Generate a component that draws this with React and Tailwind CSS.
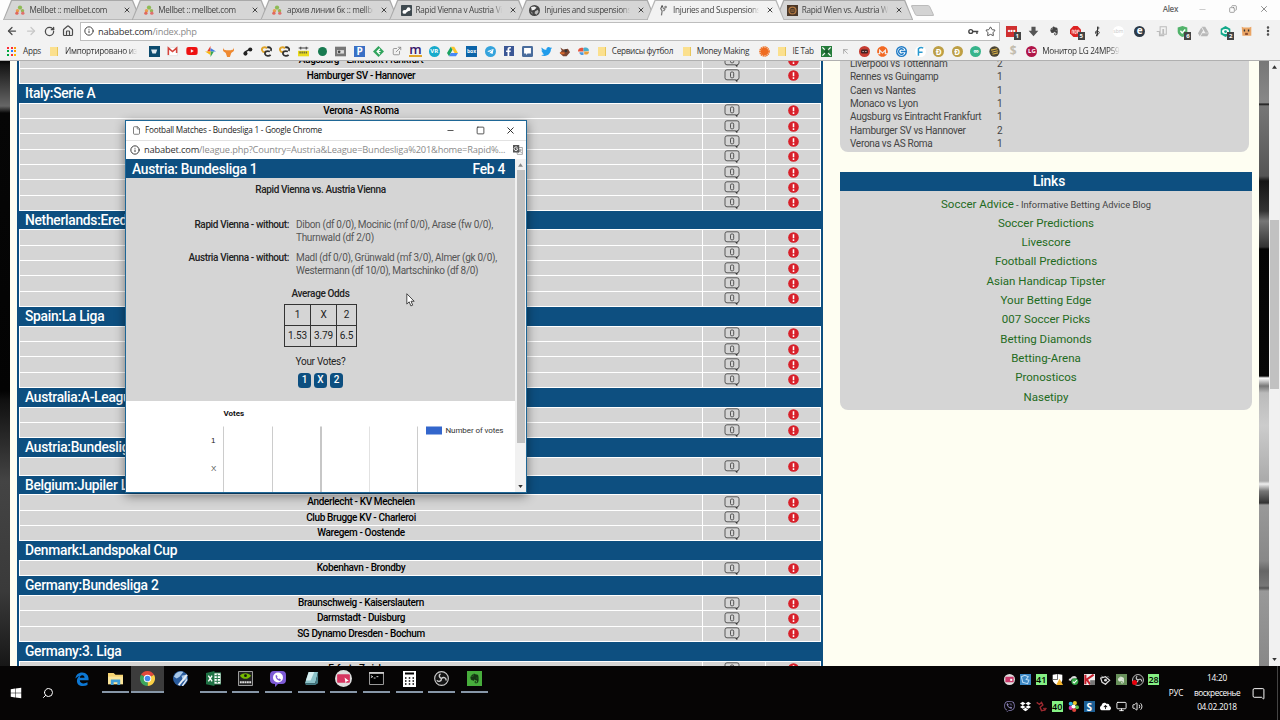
import React from "react"
import clsx from "clsx"
import { FaEvernote, FaYoutube, FaFacebookF, FaTwitter, FaTelegramPlane, FaGoogleDrive, FaDropbox, FaViber, FaWindows } from "react-icons/fa"
import { FaCloudArrowUp, FaMonero } from "react-icons/fa6"
import { ArrowLeft, ArrowRight, RotateCw, House, Info, Star, X, Minus, Square, Copy, File, Search, Monitor, Volume2, MessageSquare, ExternalLink, ArrowUpLeft, EllipsisVertical } from "lucide-react"

const tabs = [
    { title: "Mellbet :: mellbet.com", icon: "mell" },
    { title: "Mellbet :: mellbet.com", icon: "mell" },
    { title: "архив линии бк :: mellbet", icon: "mell" },
    { title: "Rapid Vienna v Austria Vienna", icon: "dots" },
    { title: "Injuries and suspensions", icon: "ball" },
    { title: "Injuries and Suspensions", icon: "player", active: true },
    { title: "Rapid Wien vs. Austria Wien", icon: "brown" },
];

const leagues = [
    { name: "Italy:Serie A", matches: ["Verona - AS Roma", "", "", "", "", "", ""] },
    { name: "Netherlands:Eredivisie", matches: ["", "", "", "", ""] },
    { name: "Spain:La Liga", matches: ["", "", "", ""] },
    { name: "Australia:A-League", matches: ["", ""] },
    { name: "Austria:Bundesliga 1", matches: [""], tall: true },
    { name: "Belgium:Jupiler League", matches: ["Anderlecht - KV Mechelen", "Club Brugge KV - Charleroi", "Waregem - Oostende"], noAlert: 2 },
    { name: "Denmark:Landspokal Cup", matches: ["Kobenhavn - Brondby"] },
    { name: "Germany:Bundesliga 2", matches: ["Braunschweig - Kaiserslautern", "Darmstadt - Duisburg", "SG Dynamo Dresden - Bochum"] },
    { name: "Germany:3. Liga", matches: ["Erfurt - Zwickau"] },
];

const votes = [
    ["Liverpool vs Tottenham", 2],
    ["Rennes vs Guingamp", 1],
    ["Caen vs Nantes", 1],
    ["Monaco vs Lyon", 1],
    ["Augsburg vs Eintracht Frankfurt", 1],
    ["Hamburger SV vs Hannover", 2],
    ["Verona vs AS Roma", 1],
];

const links = ["Soccer Predictions", "Livescore", "Football Predictions", "Asian Handicap Tipster", "Your Betting Edge", "007 Soccer Picks", "Betting Diamonds", "Betting-Arena", "Pronosticos", "Nasetipy"];

function Svg({ children, className = "size-[11px]", box = "0 0 16 16" }) {
    return <svg viewBox={box} className={clsx("shrink-0", className)} fill="none">{children}</svg>;
}

function Favicon({ type }) {
    if (type === "mell") {
        return (
            <Svg className="size-[10px]">
                <circle cx="8" cy="4" r="3.400" fill="#8dbb55" />
                <circle cx="4" cy="9" r="2.800" fill="#e8a04e" /><circle cx="12" cy="9" r="2.800" fill="#96b655" />
                <circle cx="3" cy="13" r="2.600" fill="#e0685e" /><circle cx="12.500" cy="13" r="2.600" fill="#e0706c" />
            </Svg>
        );
    }
    if (type === "dots") {
        return (
            <Svg>
                <rect width="16" height="16" rx="1" fill="#3f4a50" />
                <circle cx="5" cy="10" r="2.800" fill="#fff" /><circle cx="11" cy="6" r="2.800" fill="#fff" /><path d="M4 9l6-4 2 3-6 4z" fill="#fff" />
            </Svg>
        );
    }
    if (type === "ball") {
        return (
            <Svg>
                <circle cx="8" cy="8" r="8" fill="#444" />
                <path d="M3 3l5-1 3 2-3 3-4 1z" fill="#f2f2f2" /><path d="M9 9l4-2 1 3-3 4-3-2z" fill="#bbb" /><path d="M2 9l3 2v3z" fill="#999" />
            </Svg>
        );
    }
    if (type === "player") {
        return (
            <Svg>
                <path d="M6 2L4 5l2 4-1 6M7 4l3 2-2 3" stroke="#777" strokeWidth="1.800" /><circle cx="11" cy="3" r="2" fill="#888" /><circle cx="6" cy="2" r="1.500" fill="#555" />
            </Svg>
        );
    }
    return (
        <Svg>
            <rect width="16" height="16" fill="#4a3728" />
            <circle cx="8" cy="8" r="5" stroke="#b57a42" strokeWidth="1.800" /><path d="M5 7h6M5 9h6" stroke="#b57a42" />
        </Svg>
    );
}

function Tab({ tab }) {
    return (
        <div className={clsx("-ml-[9.300px] h-[20px] w-[138px] shrink-0 px-px pt-px [clip-path:polygon(0_100%,8px_0,130px_0,100%_100%)]", tab.active ? "relative z-10 bg-[#b5b5b5]" : "bg-[#a9a9a9]")}>
            <div className={clsx("flex h-full items-center pl-[9.500px] [clip-path:polygon(0_100%,8px_0,128px_0,100%_100%)]", tab.active ? "bg-[#f2f2f2] pb-px" : "border-b border-[#b8b8b8] bg-[#d6d6d6]")}>
                <div className="flex w-[13px] justify-center"><Favicon type={tab.icon} /></div>
                <div className="ml-[3px] w-[88px] overflow-hidden whitespace-nowrap text-[8.200px] tracking-[-0.320px] text-[#444] [mask-image:linear-gradient(to_right,#000_88%,transparent_98%)]">{tab.title}</div>
                <X className="ml-[5px] size-[8px] text-[#444]" strokeWidth={3} />
            </div>
        </div>
    );
}

function Badge({ children }) {
    return <span className="absolute -right-[3px] -bottom-[3px] h-[8px] w-[7px] bg-[#444] text-center text-[6px] leading-[8px] font-bold text-white">{children}</span>;
}

function Ext({ children }) {
    return <div className="flex w-[21.350px] shrink-0 justify-center"><div className="relative flex size-[12px] items-center justify-center">{children}</div></div>;
}

function Toolbar() {
    return (
        <div className="flex h-[22px] items-center bg-[#f2f2f2]">
            <div className="flex w-[80px] shrink-0 items-center pl-[6px] text-[#4c4c4c]">
                <ArrowLeft className="size-[12px]" strokeWidth={2.500} />
                <ArrowRight className="ml-[7px] size-[12px] text-[#c8c8c8]" strokeWidth={2.500} />
                <RotateCw className="ml-[7px] size-[11px]" strokeWidth={2.800} />
                <House className="ml-[7px] size-[12px]" strokeWidth={2.400} />
            </div>
            <div className="flex h-[19px] w-[920px] shrink-0 items-center border border-[#bdbdbd] bg-white pr-[3px] pl-[3px]">
                <Info className="size-[10px] text-[#444]" strokeWidth={2.400} />
                <span className="ml-[4px] flex-1 text-[9.300px] leading-[17px] tracking-[-0.240px] text-[#333]">nababet.com<span className="text-[#8b8b8b]">/index.php</span></span>
                <Svg className="mr-[6px] h-[7px] w-[11px]" box="0 0 16 10">
                    <circle cx="4" cy="5" r="2.800" stroke="#444" strokeWidth="2" /><path d="M7 5h8M13 5v3.500" stroke="#444" strokeWidth="2" />
                </Svg>
                <Star className="size-[11px] text-[#444]" strokeWidth={2} />
            </div>
            <div className="ml-[1px] flex">
                <Ext><span className="flex size-[11px] items-center justify-center bg-[#cf2f2f] text-[7px] leading-none font-bold text-white">•••</span><Badge>1</Badge></Ext>
                <Ext><Svg><path d="M5 1h6v6h4l-7 8-7-8h4z" fill="#555" /></Svg></Ext>
                <Ext><FaEvernote className="size-[10px] text-[#444]" /></Ext>
                <Ext>
                    <Svg><path d="M5 0h6l5 5v6l-5 5H5l-5-5V5z" fill="#d22" /><path d="M3 11V6h2v5M7 6v5h2V6zM11 11V6h2v3h-2" stroke="#fff" /></Svg>
                    <Badge>5</Badge>
                </Ext>
                <Ext><Svg className="h-[12px] w-[11px]"><path d="M8 14V2c3 0 2 3 0 4.500C4 9 4 13 8 12.500s3-4.500 0-4-1.500 2.500 0 2.500" stroke="#333" strokeWidth="1.400" /><circle cx="7" cy="14.500" r="1.300" fill="#333" /></Svg></Ext>
                <Ext><span className="size-[11px] rounded-full bg-white text-center text-[5px] leading-[11px] text-[#c5c5c5]">sbm</span></Ext>
                <Ext><span className="size-[11px] rounded-full bg-[#2d3a47] text-center text-[10px] leading-[9px] font-bold text-white">e</span></Ext>
                <Ext><Svg><path d="M6 1h9v11h-4V5h-1v7H6zM1 8h4v6h7" stroke="#bcbcbc" strokeWidth="1.500" /></Svg></Ext>
                <Ext><Svg><path d="M8 0l7 2v6c0 4-4 7-7 8-3-1-7-4-7-8V2z" fill="#52b36b" /><path d="M5 7l2.500 3L12 5" stroke="#fff" strokeWidth="2" /></Svg><Badge>6</Badge></Ext>
                <Ext><FaGoogleDrive className="size-[11px] text-[#b9b9b9]" /></Ext>
                <Ext><Svg><path d="M8 0l7 4v8l-7 4-7-4V4z" fill="#13a98b" /><ellipse cx="8" cy="8" rx="5" ry="3.500" fill="#fff" /><circle cx="8" cy="8" r="2" fill="#13a98b" /></Svg><Badge>2</Badge></Ext>
                <Ext><Svg><path d="M1 1l3 1h8l3-1v13H2z" fill="#eaa565" /><path d="M5 5v3M11 5v3" stroke="#333" strokeWidth="2" /><path d="M6 10h4v3H6z" fill="#8b4a2d" /></Svg></Ext>
                <Ext><EllipsisVertical className="size-[12px] text-[#444]" strokeWidth={3} /></Ext>
            </div>
        </div>
    );
}

function Folder() {
    return <span className="h-[9px] w-[8px] shrink-0 border-r border-[#e8c65b] bg-[#fbe08e]" />;
}

function Mark({ children }) {
    return <div className="flex w-[18.670px] shrink-0 justify-center tracking-normal">{children}</div>;
}

// round coloured bookmark with a letter in it
function Coin({ className, children }) {
    return <Mark><span className={clsx("size-[11px] rounded-full text-center text-[8px] leading-[11px] font-bold text-white", className)}>{children}</span></Mark>;
}

function Squiggle() {
    return (
        <Mark>
            <Svg>
                <path d="M9 3C4 0 0 3 2 7c1 3 5 2 5 0" stroke="#e0a52b" strokeWidth="2.800" />
                <path d="M9 2c5-1 7 3 5 5M13 8c-5-2-8 1-7 4s6 3 8 1" stroke="#333" strokeWidth="2.600" />
            </Svg>
        </Mark>
    );
}

function Bookmarks() {
    return (
        <div className="flex h-[18px] items-center overflow-hidden bg-[#f2f2f2] text-[8.200px] tracking-[-0.280px] whitespace-nowrap text-[#333]">
            <div className="ml-[7px] grid grid-cols-3 gap-[1.500px]">
                {["bg-red-500", "bg-red-500", "bg-amber-500", "bg-green-600", "bg-blue-500", "bg-amber-500", "bg-green-600", "bg-red-500", "bg-amber-400"].map((c, i) => <span key={i} className={clsx("size-[2px]", c)} />)}
            </div>
            <span className="ml-[7px] w-[27px]">Apps</span>
            <Folder />
            <span className="ml-[7px] w-[80px] overflow-hidden [mask-image:linear-gradient(to_right,#000_80%,transparent_90%)]">Импортировано из IE</span>
            <Mark><Svg><rect width="16" height="16" fill="#0c4b6e" /><path d="M3 5h9l-2 6H5z" fill="#dfe9ef" /></Svg></Mark>
            <Mark><Svg><path d="M1 2h14v12H1z" fill="#fff" stroke="#ddd" /><path d="M2 13V3l6 5 6-5v7" stroke="#d6453d" strokeWidth="2.300" /></Svg></Mark>
            <Mark><FaYoutube className="size-[12px] text-[#e11]" /></Mark>
            <Mark><Svg><path d="M8 0v8H3z" fill="#e34133" /><path d="M16 8H8V3z" fill="#3f7de8" /><path d="M8 16V8h5z" fill="#34a653" /><path d="M0 8h8v5z" fill="#f8b90a" /></Svg></Mark>
            <Mark><Svg><path d="M0 2c1 4 3 4 8 4s7 0 8-4c1 5-1 7-4 8l-2 6H6l-2-6C1 9-1 7 0 2z" fill="#ef8a32" /></Svg></Mark>
            <Mark><Svg><circle cx="5" cy="11" r="3" fill="#222" /><circle cx="12" cy="5" r="3" fill="#222" /><path d="M4 9l7-4" stroke="#222" strokeWidth="2" /></Svg></Mark>
            <Squiggle />
            <Squiggle />
            <Mark><Svg><rect y="7" width="16" height="8" fill="#eadb1c" /><path d="M1 3h14M4 1v4M12 1v4M3 8v3M6 8v3M9 8v3M12 8v3" stroke="#444" strokeWidth="1.500" /></Svg></Mark>
            <Mark><span className="size-[9px] rounded-full bg-[#187a50]" /></Mark>
            <Mark><Svg><rect width="16" height="14" y="1" fill="#777" /><path d="M3 6h10v5H3z" fill="#ddd" /><circle cx="6" cy="8.500" r="2" fill="#444" /></Svg></Mark>
            <Mark><span className="size-[11px] bg-[#3a70c5] text-center text-[10px] leading-[11px] font-bold text-white">P</span></Mark>
            <Mark><Svg><path d="M8 0l8 8-8 8-8-8z" fill="#31a45d" /><path d="M10 4L6 8l4 4M11 8H6" stroke="#fff" strokeWidth="1.800" /></Svg></Mark>
            <Mark><ExternalLink className="size-[10px] text-[#888]" /></Mark>
            <Mark><span className="h-[12px] border-b-2 border-[#e0a52b] text-[13px] leading-[8px] font-semibold text-[#38166b]">m</span></Mark>
            <Coin className="bg-[#17aacb] !text-[6px]">VR</Coin>
            <Mark><Svg><path d="M5.500 1h5L16 10h-5z" fill="#fbc52c" /><path d="M5.500 1L8 5.500 3 15 0 10z" fill="#1aa260" /><path d="M5.500 10H16l-3 5H3z" fill="#4688f4" /></Svg></Mark>
            <Mark><span className="size-[11px] bg-[#0c64a8] text-center text-[5px] leading-[11px] font-bold text-white">box</span></Mark>
            <Mark><span className="flex size-[11px] items-center justify-center rounded-full bg-[#34a3dc]"><FaTelegramPlane className="size-[7px] text-white" /></span></Mark>
            <Mark><span className="flex size-[10px] items-end justify-center bg-[#3b5795]"><FaFacebookF className="size-[9px] text-white" /></span></Mark>
            <Mark><Svg><rect width="16" height="16" rx="2" fill="#496c9c" /><path d="M3 3h10v8H8l-2 2v-2H3z" fill="#fff" /></Svg></Mark>
            <Mark><FaTwitter className="size-[11px] text-[#209ceb]" /></Mark>
            <Mark><Svg><path d="M2 2l4 3 7-1 3 5-5 6H6l-5-5 3-3z" fill="#7a4430" /><path d="M1 9h7v3H3z" fill="#d86a2c" /><circle cx="10" cy="7" r="2" fill="#333" /></Svg></Mark>
            <Mark><Svg><path d="M0 8c0-6 6-6 8-5v5z" fill="#e5533d" /><path d="M8 3c5-2 8 1 8 4l-8 1z" fill="#47b0cf" /><path d="M16 8c0 5-5 5-7 4V8z" fill="#e9a03b" /><path d="M2 9h6v4c-3 1-6-1-6-4z" fill="#4d9be0" /></Svg></Mark>
            <div className="ml-[5px] flex"><Folder /></div>
            <span className="ml-[6px] w-[71px]">Сервисы футбол</span>
            <Folder />
            <span className="ml-[6px] w-[58px]">Money Making</span>
            <Mark><Svg><circle cx="8" cy="8" r="6.500" stroke="#ee7328" strokeWidth="2.500" strokeDasharray="2 .7" /><circle cx="8" cy="8" r="5.500" fill="#ee6b20" /></Svg></Mark>
            <div className="ml-[5px] flex"><Folder /></div>
            <span className="ml-[6px] w-[25px]">IE Tab</span>
            <Mark><Svg><rect width="16" height="16" fill="#247c3a" /><path d="M2 2l12 12M14 2L2 14" stroke="#fff" strokeWidth="2" /><circle cx="8" cy="8" r="3.500" fill="#195f2d" /></Svg></Mark>
            <Mark><ArrowUpLeft className="size-[9px] text-[#999]" /></Mark>
            <Mark><Svg><circle cx="8" cy="8" r="8" fill="#c63c32" /><rect x="3" y="5" width="10" height="6" rx="2" fill="#422" /><path d="M5 8h2M9 8h2" stroke="#fff" /></Svg></Mark>
            <Mark><FaMonero className="size-[11px] text-[#f26822]" /></Mark>
            <Mark><Svg><circle cx="8" cy="8" r="7" fill="#fff" stroke="#1d79c4" strokeWidth="2" /><path d="M11 5.500a4 4 0 100 5M7 8h8" stroke="#1d79c4" strokeWidth="2" /></Svg></Mark>
            <Mark><Svg><circle cx="8" cy="8" r="8" fill="#fff" /><path d="M5 14V4c2-2 5-2 7-1M5 9h6" stroke="#2999cf" strokeWidth="2.200" /></Svg></Mark>
            <Coin className="bg-[#bd9f45]">Ð</Coin>
            <Coin className="bg-[#bd9f45]">Ð</Coin>
            <Coin className="bg-[#37b48b] !leading-[10px]">∞</Coin>
            <Mark><Svg><circle cx="8" cy="8" r="7.500" fill="#4a4433" /><path d="M3 6l9-2M4 9l9-2M5 12l8-2" stroke="#d9b047" strokeWidth="1.500" /></Svg></Mark>
            <Mark><span className="text-[12px] leading-none font-bold text-[#c2bcae]">$</span></Mark>
            <Coin className="bg-[#b01548] !text-[6px]">LG</Coin>
            <span className="ml-[1px] w-[78px] overflow-hidden [mask-image:linear-gradient(to_right,#000_86%,transparent)]">Монитор LG 24MP59</span>
        </div>
    );
}

function MatchRow({ name, alert = true, tall }) {
    return (
        <div className={clsx("flex shrink-0 border-b border-white bg-white text-center text-[10px] font-medium tracking-[-0.360px] text-black", tall ? "h-[18px]" : "h-[15.330px]")}>
            <div className="w-[682px] bg-[#d5d5d5] leading-[14.500px]">{name}</div>
            <div className="ml-px flex w-[62px] items-center justify-center bg-[#d5d5d5] pr-[4px]">
                <Svg className="h-[13px] w-[16px]" box="0 0 16 13">
                    <path d="M3 .8h10q2 0 2 2v6q0 2-2 2v1.700l-1.800-1.700H3q-2 0-2-2v-6q0-2 2-2z" stroke="#4a4a4a" strokeWidth=".9" />
                    <path d="M11 10.800h2.200v1.900z" fill="#333" />
                    <rect x="6.500" y="3" width="3.200" height="5.800" rx="1.200" stroke="#444" strokeWidth=".9" />
                </Svg>
            </div>
            <div className="ml-px flex flex-1 items-center justify-center bg-[#d5d5d5]">
                {alert && (
                    <Svg className="h-[11px] w-[11px]" box="0 0 12 12">
                        <circle cx="6" cy="6" r="5.800" fill="#d8202a" /><path d="M6 2.500v4.200M6 8v1.700" stroke="#fff" strokeWidth="1.700" />
                    </Svg>
                )}
            </div>
        </div>
    );
}

function LeagueTable() {
    return (
        <div className="ml-[7px] h-full w-[806px] shrink-0 overflow-hidden bg-[#0d4f80] px-[2px]">
            <div className="-mt-[7.670px] border-x border-white">
                <MatchRow name="Augsburg - Eintracht Frankfurt" />
                <MatchRow name="Hamburger SV - Hannover" />
            </div>
            {leagues.map((league) => (
                <div key={league.name}>
                    <h2 className="h-[18.600px] overflow-hidden pl-[6px] text-[13.800px] leading-[18.800px] font-medium tracking-[-0.280px] text-white">{league.name}</h2>
                    <div className="border-x border-t border-white">
                        {league.matches.map((m, i) => <MatchRow key={i} name={m} tall={league.tall} alert={league.noAlert !== i} />)}
                    </div>
                </div>
            ))}
        </div>
    );
}

function Sidebar() {
    return (
        <div className="ml-[17px] w-[412px] shrink-0">
            <div className="h-[91px] w-[409px] overflow-hidden rounded-b-[8px] bg-[#d5d5d5] pl-[10px] text-[10px] text-[#444]">
                <div className="-mt-[4px]">
                    {votes.map(([match, n]) => (
                        <div key={match} className="flex h-[13.330px] leading-[13.330px]">
                            <span className="w-[147px] tracking-[-0.290px]">{match}</span><span>{n}</span>
                        </div>
                    ))}
                </div>
            </div>
            <h2 className="mt-[20px] h-[18.500px] bg-[#0d4f80] pl-[6px] text-center text-[13.800px] leading-[19px] font-medium tracking-[-0.150px] text-white">Links</h2>
            <div className="h-[219.500px] rounded-b-[8px] bg-[#d5d5d5] pt-[4px] text-center text-[11.500px] text-[#1f6b22]">
                <p className="h-[19.300px] leading-[19.300px]">Soccer Advice<span className="text-[9.300px] text-[#444]"> - Informative Betting Advice Blog</span></p>
                {links.map((l) => <p key={l} className="h-[19.330px] leading-[19.330px]">{l}</p>)}
            </div>
        </div>
    );
}

function PopupWindow() {
    return (
        <div className="absolute top-[120px] left-[125px] flex h-[373px] w-[402px] flex-col overflow-hidden border border-[#1f6796] bg-white shadow-[0_3px_10px_rgba(0,0,0,0.450)]">
            <div className="flex h-[19px] shrink-0 items-center pl-[6px] font-['Open_Sans',sans-serif] text-[8.200px] text-[#222]">
                <File className="size-[9px] text-[#555]" strokeWidth={2} />
                <span className="ml-[4px] flex-1 tracking-[-0.220px]">Football Matches - Bundesliga 1 - Google Chrome</span>
                <Minus className="size-[9px]" strokeWidth={2} />
                <Square className="ml-[21px] size-[9px]" strokeWidth={2} />
                <X className="mr-[10px] ml-[20px] size-[11px]" strokeWidth={2} />
            </div>
            <div className="flex h-[19px] shrink-0 items-center border-t border-[#e2e2e2] pl-[4px] font-['Open_Sans',sans-serif] text-[9.300px] text-[#333]">
                <Info className="size-[10px]" strokeWidth={2.300} />
                <span className="ml-[4px] w-[366px] tracking-[-0.180px] whitespace-nowrap">nababet.com<span className="text-[#8b8b8b]">/league.php?Country=Austria&amp;League=Bundesliga%201&amp;home=Rapid%...</span></span>
                <Svg className="ml-[3px] size-[10px]"><path d="M5 4h10v11H7z" fill="#fff" stroke="#777" /><rect width="10" height="12" fill="#555" /><path d="M7 4a3 3 0 100 4V6H5" stroke="#fff" strokeWidth="1.400" /><path d="M9 8h5M11.500 7c0 3-1 4-3 5M10 9l4 4" stroke="#666" /></Svg>
            </div>
            <div className="flex min-h-0 flex-1">
                <div className="flex w-[389px] flex-col overflow-hidden text-[10px] text-[#222]">
                    <div className="flex h-[19px] shrink-0 justify-between bg-[#0d4f80] pr-[10px] pl-[6px] text-[13.800px] leading-[20px] font-medium tracking-[-0.280px] text-white">
                        <span>Austria: Bundesliga 1</span><span>Feb 4</span>
                    </div>
                    <div className="flex h-[223px] shrink-0 flex-col items-center bg-[#d5d5d5]">
                        <p className="mt-[5px] h-[13px] leading-[13px] font-medium tracking-[-0.380px]">Rapid Vienna vs. Austria Vienna</p>
                        <div className="mt-[22px] flex w-full leading-[13.330px] whitespace-nowrap">
                            <p className="w-[163px] text-right font-medium tracking-[-0.380px]">Rapid Vienna - without:</p>
                            <p className="ml-[7px] tracking-[-0.300px] text-[#555]">Dibon (df 0/0), Mocinic (mf 0/0), Arase (fw 0/0),<br />Thurnwald (df 2/0)</p>
                        </div>
                        <div className="mt-[6.500px] flex w-full leading-[13.330px] whitespace-nowrap">
                            <p className="w-[163px] text-right font-medium tracking-[-0.380px]">Austria Vienna - without:</p>
                            <p className="ml-[7px] tracking-[-0.300px] text-[#555]">Madl (df 0/0), Grünwald (mf 3/0), Almer (gk 0/0),<br />Westermann (df 10/0), Martschinko (df 8/0)</p>
                        </div>
                        <p className="mt-[9px] leading-[13px] font-medium tracking-[-0.360px]">Average Odds</p>
                        <div className="mt-[4.500px] grid grid-cols-[26px_26px_20px] grid-rows-2 border-t border-l border-[#333] text-center leading-[20px] tracking-[-0.100px]">
                            {["1", "X", "2", "1.53", "3.79", "6.5"].map((v) => <span key={v} className="h-[21px] border-r border-b border-[#333]">{v}</span>)}
                        </div>
                        <p className="mt-[8px] leading-[13px] tracking-[-0.300px]">Your Votes?</p>
                        <div className="mt-[5px] flex gap-[3px] text-center leading-[14px] font-medium text-white">
                            {["1", "X", "2"].map((v) => <span key={v} className="h-[15px] w-[13px] rounded-[3.500px] bg-[#0d4f80]">{v}</span>)}
                        </div>
                    </div>
                    <svg viewBox="0 0 389 91" className="h-[91px] w-[389px] shrink-0">
                        <path d="M97.500 25.500V91M146.500 25.500V91M291.500 25.500V91" stroke="#ccc" />
                        <path d="M243.500 25.500V91" stroke="#e2e2e2" />
                        <path d="M195 25.500V91" stroke="#b5b5b5" strokeWidth="1.500" />
                        <rect x="300" y="25.500" width="16" height="8" fill="#3366cc" />
                        <g className="font-['Liberation_Sans',sans-serif] text-[8px] tracking-normal">
                            <text x="97.500" y="15" className="font-['Roboto',sans-serif] font-bold" fill="#111">Votes</text>
                            <text x="319.500" y="32" className="font-['Roboto',sans-serif]" fill="#333" textLength="58">Number of votes</text>
                            <text x="85" y="42" fill="#222">1</text>
                            <text x="85" y="70" fill="#555">X</text>
                            <text x="85" y="96" fill="#222">2</text>
                        </g>
                    </svg>
                </div>
                <div className="flex flex-1 flex-col items-center justify-between bg-[#f1f1f1] py-[4px]">
                    <Svg className="h-[4px] w-[5px]" box="0 0 6 4"><path d="M0 4l3-4 3 4z" fill="#888" /></Svg>
                    <div className="mt-[3px] mb-auto h-[273px] w-[8px] bg-[#c1c1c1]" />
                    <Svg className="h-[3px] w-[5px]" box="0 0 6 4"><path d="M0 0l3 4 3-4z" fill="#333" /></Svg>
                </div>
            </div>
        </div>
    );
}

function TaskItem({ children, open = true, active }) {
    return (
        <div className={clsx("flex h-[27px] w-[32.700px] shrink-0 flex-col items-center", active && "bg-[#3c3c3c]")}>
            <div className="flex h-[25px] items-center">{children}</div>
            {open && <div className={clsx("h-[2px] bg-[#8797a8]", active ? "w-full" : "w-[27px]")} />}
        </div>
    );
}

function Tray({ children, className }) {
    return <span className="flex h-[11px] w-[16.070px] shrink-0 items-center justify-center"><span className={clsx("flex size-[11px] items-center justify-center", className)}>{children}</span></span>;
}

function Obs({ className }) {
    return (
        <Svg className={className}>
            <circle cx="8" cy="8" r="7.300" fill="#151515" stroke="#ccc" strokeWidth="1.200" />
            <path d="M8 8C5 7 5 4 7 3M8 8c2-2 5-1 5 2M8 8c0 3-3 4-5 2" stroke="#ccc" strokeWidth="1.500" />
        </Svg>
    );
}

function Taskbar() {
    return (
        <div className="flex h-[54px] shrink-0 bg-[#060505] font-['Open_Sans',sans-serif] text-white">
            <div className="flex w-[66px] shrink-0 items-center pl-[10px]">
                <FaWindows className="size-[12px]" />
                <Search className="ml-[20px] size-[12px] -scale-x-100" strokeWidth={2} />
            </div>
            <div className="flex">
                <TaskItem open={false}>
                    <Svg className="size-[14px]">
                        <path d="M.5 7.500C1 3 4 .5 8.200.5 13 .5 15.500 4 15.500 7.500v2H5.500c0 2.500 2 3.500 4.300 3.500 1.700 0 3-.4 4.500-1.200v3c-1.500.8-3.200 1.200-5.300 1.200-4.300 0-6.800-2.400-6.800-5.800 0-2.600 1.300-4.600 3.300-5.600C3.500 5 1.800 6 .5 7.500zM5.600 6.600h5.300c0-1.900-.9-3-2.600-3S5.700 5 5.600 6.600z" fill="#0d78d4" fillRule="evenodd" />
                    </Svg>
                </TaskItem>
                <TaskItem><Svg className="size-[15px]"><path d="M0 2h6l2 2h8v10H0z" fill="#f5d371" /><path d="M0 6h16v8H0z" fill="#fbe59a" /><path d="M3 9h10v6h-3v-3H6v3H3z" fill="#3e9fd8" /></Svg></TaskItem>
                <TaskItem active>
                    <Svg className="size-[15px]">
                        <path d="M8 8L1.070 4A8 8 0 0114.930 4z" fill="#e04a3c" /><path d="M8 8l6.930-4A8 8 0 018 16z" fill="#f9cf45" /><path d="M8 8v8A8 8 0 011.070 4z" fill="#3ba55c" />
                        <circle cx="8" cy="8" r="4" fill="#fff" /><circle cx="8" cy="8" r="3" fill="#4588ee" />
                    </Svg>
                </TaskItem>
                <TaskItem open={false}><Svg className="size-[15px]"><circle cx="8" cy="8" r="8" fill="#295b9d" /><path d="M1 6c2-5 6-6 10-5L7 6l-3 2zM9 5l5-1 1 4-4 3z" fill="#a7c7e8" /><path d="M6 15L15 4" stroke="#e7eef5" strokeWidth="2" /><path d="M10 16l5-7" stroke="#e7eef5" strokeWidth="1.500" /></Svg></TaskItem>
                <TaskItem><Svg className="size-[15px]"><path d="M8 2h8v12H8z" fill="#fff" stroke="#1f7244" /><path d="M9 5h6M9 8h6M9 11h6M12 3v10" stroke="#1f7244" /><path d="M0 2l9-2v16l-9-2z" fill="#1f7244" /><path d="M2.500 5l4 6M6.500 5l-4 6" stroke="#fff" strokeWidth="1.500" /></Svg></TaskItem>
                <TaskItem><Svg className="size-[15px]"><path d="M.5.500h15v15H.5z" fill="#222" stroke="#aaa" /><path d="M2 5c4-4 9-3 12 0-3 4-8 5-12 0z" fill="#76b900" /><circle cx="8" cy="5" r="1.500" fill="#111" /><path d="M2 12h12" stroke="#ddd" strokeWidth="2" strokeDasharray="2 .5" /></Svg></TaskItem>
                <TaskItem><Svg className="size-[16px]"><path d="M4 0h8q4 0 4 4v5q0 4-4 4H8l-3 3v-3Q0 13 0 9V4q0-4 4-4z" fill="#7d5ad6" /><circle cx="8" cy="6.500" r="5" fill="#fff" /><path d="M5.500 4.500c0 3 2 5 4.500 5.500l1-1.500-1.500-1-1 .5-1.500-1.500.5-1-1-1.500z" fill="#7d5ad6" /></Svg></TaskItem>
                <TaskItem><Svg className="size-[15px]"><path d="M5 1h10l-3 12H1z" fill="#8cc3c9" /><path d="M5 1h6l-4 9H2z" fill="#d6eef0" /><path d="M1 13l11 0 3-12v12l-3 2H2z" fill="#467c86" /></Svg></TaskItem>
                <TaskItem><Svg className="size-[17px]"><circle cx="8" cy="8" r="8" fill="#ddd" /><rect x="2" y="4" width="12" height="8" rx="1" fill="#d63460" /><path d="M9 7l4 3-2 .5-1 2z" fill="#fff" /></Svg></TaskItem>
                <TaskItem><Svg className="h-[13px] w-[15px]" box="0 0 16 14"><path d="M.5.500h15v13H.5z" fill="#000" stroke="#aaa" /><path d="M0 1h16" stroke="#ccc" strokeWidth="2" /><path d="M2 4l2 1-2 1M5 6.500h2M8 5h2" stroke="#ddd" /></Svg></TaskItem>
                <TaskItem><Svg className="h-[16px] w-[13px]" box="0 0 13 16"><path d="M0 0h13v16H0z" fill="#fff" /><path d="M2 2.500h9" stroke="#000" strokeWidth="2" /><path d="M2 7h9M2 10h9M2 13h9" stroke="#000" strokeWidth="1.500" strokeDasharray="1.500 2.250" /></Svg></TaskItem>
                <TaskItem><Obs className="size-[15px]" /></TaskItem>
                <TaskItem><span className="flex size-[15px] items-center justify-center bg-[#47ad3c]"><FaEvernote className="size-[11px] text-[#153614]" /></span></TaskItem>
            </div>
            <div className="ml-auto flex w-[162px] shrink-0 flex-col pt-[8px]">
                <div className="flex">
                    <Tray><Svg><circle cx="8" cy="8" r="8" fill="#ddd" /><rect x="2" y="4" width="12" height="8" fill="#c9386a" /><path d="M9 7h3v3H9z" fill="#fff" /></Svg></Tray>
                    <Tray><Svg><rect width="16" height="16" fill="#3b87c4" /><path d="M2 4l5-2 5 2-3 4 4 1-2 5-7-2z" stroke="#b8d9f2" strokeWidth="1.500" /></Svg></Tray>
                    <Tray className="bg-[#85f184] text-[9px] font-semibold text-black">41</Tray>
                    <Tray><Svg><path d="M1 1l7-1 7 1v7c0 4-4 7-7 8-3-1-7-4-7-8z" fill="#fff" /><path d="M8 0v8H1" stroke="#333" /><path d="M11 7l5 9H6z" fill="#f4b32c" /></Svg></Tray>
                    <Tray><Svg><path d="M1 9c0-3 3-3 3-3 2-4 8-4 9 0l-2 1H6l-2 3z" fill="#ddd" /><circle cx="10" cy="11" r="5" fill="#35a947" /><path d="M7 11l2 2 4-4" stroke="#fff" strokeWidth="1.500" /></Svg></Tray>
                    <Tray><Svg><rect width="16" height="16" fill="#eee" /><path d="M2 1v14M14 1L4 8l5 7" stroke="#c51f2c" strokeWidth="3" /><path d="M9 9h7v7H9z" fill="#777" /></Svg></Tray>
                    <Tray><Svg><path d="M1 6l7-2 6 5-6 6-5-3z" stroke="#ddd" strokeWidth="1.800" /><circle cx="8" cy="9" r="2" fill="#ddd" /><path d="M2 3l3 2M11 3l2 2" stroke="#ddd" /></Svg></Tray>
                    <Tray className="bg-[#68915b]"><FaEvernote className="size-[8px] text-[#dce8d8]" /></Tray>
                    <Tray className="relative"><Obs className="size-[12px]" /><span className="absolute bottom-0 left-0 size-[5px] rounded-full bg-red-600" /></Tray>
                    <Tray className="bg-[#85f184] text-[9px] font-semibold text-black">28</Tray>
                </div>
                <div className="mt-[16px] flex">
                    <Tray><FaViber className="size-[11px] text-[#8d84bd]" /></Tray>
                    <Tray><FaDropbox className="size-[11px]" /></Tray>
                    <Tray><Svg><path d="M1 2l4 3 3-3 2 4-4 3 2 5 6-1M11 10l2 3 2-3" stroke="#9c2930" strokeWidth="2" /></Svg></Tray>
                    <Tray className="bg-[#85f184] text-[9px] font-semibold text-black">40</Tray>
                    <Tray><Svg><circle cx="4" cy="4" r="3" fill="#2ab4e8" /><circle cx="10" cy="3" r="3" fill="#e8c62a" /><circle cx="13" cy="9" r="3" fill="#5bbf4b" /><circle cx="4" cy="10" r="3" fill="#d63aa8" /><circle cx="9" cy="13" r="3" fill="#e0443b" /><circle cx="8" cy="8" r="3" fill="#fff" /></Svg></Tray>
                    <Tray className="bg-[#1d5f94] text-[10px] leading-none font-bold">S</Tray>
                    <Tray><FaCloudArrowUp className="size-[11px]" /></Tray>
                    <Tray><Monitor className="size-[11px]" /></Tray>
                    <Tray><Volume2 className="size-[11px]" /></Tray>
                </div>
            </div>
            <div className="ml-[2px] flex w-[22px] shrink-0 items-center justify-center text-[8.200px] tracking-[-0.200px]">РУС</div>
            <div className="ml-[4px] flex w-[52px] shrink-0 flex-col items-center pt-[5px] text-[8.300px] leading-[14.700px] tracking-[-0.260px]">
                <span>14:20</span><span className="tracking-[-0.450px]">воскресенье</span><span>04.02.2018</span>
            </div>
            <div className="flex w-[35px] shrink-0 items-center border-r border-[#444] pl-[9px]"><MessageSquare className="size-[13px] -scale-x-100" strokeWidth={1.800} /></div>
            <div className="w-[2px]" />
        </div>
    );
}

export default function App() {
    return (
        <div className="relative flex h-[720px] w-[1280px] flex-col overflow-hidden bg-white font-['Roboto',sans-serif]">
            <div className="h-[61px] shrink-0 border-b border-[#b0b0b0] bg-[#f2f2f2] font-['Open_Sans',sans-serif]">
                <div className="flex h-[20px] items-start bg-[#fdfdfd] pl-[12.300px]">
                    {tabs.map((tab, i) => <Tab key={i} tab={tab} />)}
                    <div className="mt-[5px] ml-0 h-[11px] w-[19px] skew-x-[25deg] rounded-[2px] border border-[#bbb] bg-[#d3d3d3]" />
                    <div className="mt-[4px] mr-[11px] ml-auto flex items-center text-[#777]">
                        <span className="text-[8px] leading-[10px] font-semibold tracking-[-0.300px] text-[#666]">Alex</span>
                        <Minus className="ml-[20px] size-[9px] text-[#bbb]" />
                        <Copy className="ml-[22px] size-[8px] -scale-x-100" />
                        <X className="ml-[22px] size-[10px]" />
                    </div>
                </div>
                <Toolbar />
                <Bookmarks />
            </div>
            <div className="flex h-[605px] shrink-0 overflow-hidden bg-[#fefef2]">
                <div className="w-[10px] shrink-0 bg-[linear-gradient(to_bottom,#050505_0,#161616_4px,#444_28px,#666_45px,#060606_52px,#030303_330px,#111_340px,#444_420px,#3a3a3a_530px,#171717_605px)]" />
                <LeagueTable />
                <Sidebar />
                <div className="ml-[7px] w-[10px] shrink-0 bg-[linear-gradient(to_bottom,#777_0,#888_42px,#111_43px,#777_45px,#555_115px,#151515_120px,#333_150px,#777_160px,#333_186px,#040404_188px,#080808_315px,#fff_317px,#777_325px,#bbb_332px,#ccc_365px,#aaa_420px,#eee_423px,#777_430px,#333_442px,#999_444px,#888_500px,#666_510px,#777_525px,#555_527px,#999_530px,#888_605px)]" />
                <div className="flex flex-1 flex-col items-center bg-[#f1f1f1] pt-[4px] pb-[5px]">
                    <Svg className="h-[4px] w-[5px]" box="0 0 6 4"><path d="M0 4l3-4 3 4z" fill="#333" /></Svg>
                    <div className="mt-[151px] h-[169px] w-[9px] bg-[#c1c1c1]" />
                    <Svg className="mt-auto h-[3px] w-[5px]" box="0 0 6 4"><path d="M0 0l3 4 3-4z" fill="#333" /></Svg>
                </div>
            </div>
            <Taskbar />
            <PopupWindow />
            <svg viewBox="0 0 12 19" className="absolute top-[293px] left-[406px] h-[14px] w-[9px]">
                <path d="M1 1v14l3.200-3 2.300 5.500 2.500-1-2.300-5.300H11z" fill="#fff" stroke="#333" strokeWidth="1.200" />
            </svg>
        </div>
    );
}
